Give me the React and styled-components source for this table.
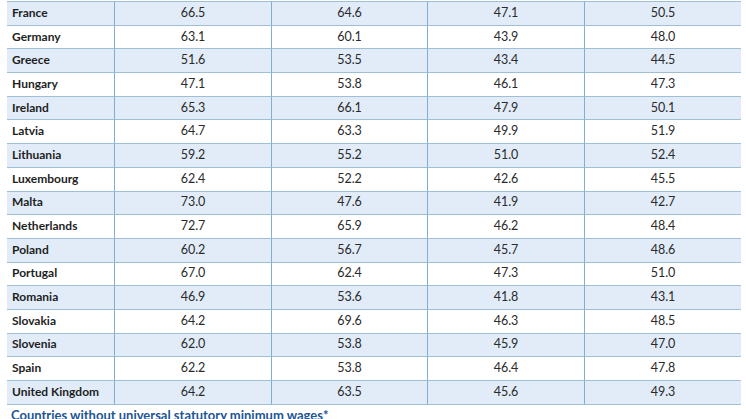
import styled, { createGlobalStyle } from 'styled-components';

const rows = [
  ['France', '66.5', '64.6', '47.1', '50.5'],
  ['Germany', '63.1', '60.1', '43.9', '48.0'],
  ['Greece', '51.6', '53.5', '43.4', '44.5'],
  ['Hungary', '47.1', '53.8', '46.1', '47.3'],
  ['Ireland', '65.3', '66.1', '47.9', '50.1'],
  ['Latvia', '64.7', '63.3', '49.9', '51.9'],
  ['Lithuania', '59.2', '55.2', '51.0', '52.4'],
  ['Luxembourg', '62.4', '52.2', '42.6', '45.5'],
  ['Malta', '73.0', '47.6', '41.9', '42.7'],
  ['Netherlands', '72.7', '65.9', '46.2', '48.4'],
  ['Poland', '60.2', '56.7', '45.7', '48.6'],
  ['Portugal', '67.0', '62.4', '47.3', '51.0'],
  ['Romania', '46.9', '53.6', '41.8', '43.1'],
  ['Slovakia', '64.2', '69.6', '46.3', '48.5'],
  ['Slovenia', '62.0', '53.8', '45.9', '47.0'],
  ['Spain', '62.2', '53.8', '46.4', '47.8'],
  ['United Kingdom', '64.2', '63.5', '45.6', '49.3'],
];

const GlobalStyle = createGlobalStyle`
  body {
    margin: 0;
    background: #fff;
    font-family: Lato, "Open Sans", sans-serif;
  }
`;

const Page = styled.div`
  padding: 1px 5px 0 7px;
  width: 746px;
  height: 419px;
  box-sizing: border-box;
  overflow: hidden;
`;

const Table = styled.div`
  display: grid;
  grid-template-columns: 107px 157px 156px 157px 157px;
  border-top: 1px solid #9fbfd6;
`;

const Row = styled.div`
  display: contents;
`;

const Cell = styled.div`
  height: 23.7px;
  box-sizing: border-box;
  display: flex;
  align-items: center;
  justify-content: ${(p) => (p.$name ? 'flex-start' : 'center')};
  padding: ${(p) => (p.$name ? '0 0 2px 5px' : '0 0 2px 0')};
  background: ${(p) => (p.$striped ? '#e1ecf8' : '#fff')};
  border-bottom: 1px solid #9fbfd6;
  border-left: ${(p) => (p.$name ? 'none' : '1px solid #7fb0d3')};
  font-size: ${(p) => (p.$name ? '12px' : '12.5px')};
  font-weight: ${(p) => (p.$name ? 700 : 400)};
  color: ${(p) => (p.$name ? '#1e1e1e' : '#2a2a2a')};
`;

const Caption = styled.div`
  padding: 2px 0 0 4px;
  font-size: 13px;
  font-weight: 700;
  color: #1d5593;
  white-space: nowrap;
`;

export default function App() {
  return (
    <Page>
      <GlobalStyle />
      <Table>
        {rows.map((r, i) => (
          <Row key={r[0]}>
            {r.map((v, j) => (
              <Cell key={j} $name={j === 0} $striped={i % 2 === 0}>
                {v}
              </Cell>
            ))}
          </Row>
        ))}
      </Table>
      <Caption>Countries without universal statutory minimum wages*</Caption>
    </Page>
  );
}
